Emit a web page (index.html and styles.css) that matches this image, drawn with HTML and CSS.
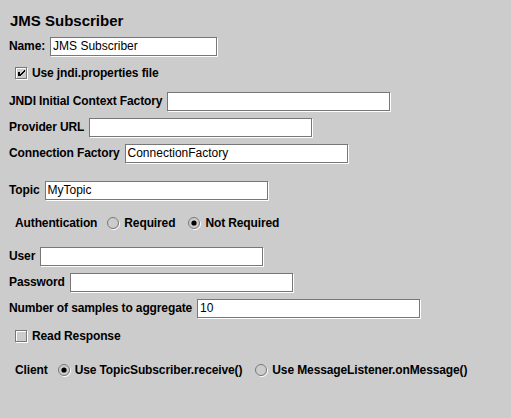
FILE: index.html
```html
<!DOCTYPE html>
<html>
<head>
<meta charset="utf-8">
<title>JMS Subscriber</title>
<link rel="stylesheet" href="styles.css">
</head>
<body>
<div class="panel">
  <div class="title">JMS Subscriber</div>

  <div class="row">
    <span class="label">Name:</span>
    <span class="field name-field">JMS Subscriber</span>
  </div>

  <div class="row sub mt1">
    <svg class="check" width="13" height="13" viewBox="0 0 13 13" shape-rendering="crispEdges">
      <rect x="1.5" y="1.5" width="11" height="11" fill="none" stroke="#fff"/>
      <rect x="0.5" y="0.5" width="11" height="11" fill="none" stroke="#777"/>
      <rect x="3" y="5" width="2" height="4" fill="#000"/>
      <rect x="5" y="7" width="1" height="2" fill="#000"/>
      <rect x="6" y="6" width="1" height="2" fill="#000"/>
      <rect x="7" y="5" width="1" height="2" fill="#000"/>
      <rect x="8" y="4" width="1" height="2" fill="#000"/>
      <rect x="9" y="3" width="1" height="2" fill="#000"/>
    </svg>
    <span class="label">Use jndi.properties file</span>
  </div>

  <div class="row mt2">
    <span class="label">JNDI Initial Context Factory</span>
    <span class="field"></span>
  </div>

  <div class="row">
    <span class="label">Provider URL</span>
    <span class="field"></span>
  </div>

  <div class="row">
    <span class="label">Connection Factory</span>
    <span class="field">ConnectionFactory</span>
  </div>

  <div class="row mt11">
    <span class="label">Topic</span>
    <span class="field">MyTopic</span>
  </div>

  <div class="row sub mt7">
    <span class="label group-label">Authentication</span>
    <span class="option">
      <svg class="radio" width="13" height="13" viewBox="0 0 13 13">
        <circle cx="7" cy="7" r="5.5" fill="none" stroke="#fff"/>
        <circle cx="6" cy="6" r="5.5" fill="#ccc" stroke="#777"/>
      </svg>
      <span class="label">Required</span>
    </span>
    <span class="option">
      <svg class="radio" width="13" height="13" viewBox="0 0 13 13">
        <circle cx="7" cy="7" r="5.5" fill="none" stroke="#fff"/>
        <circle cx="6" cy="6" r="5.5" fill="#ccc" stroke="#777"/>
        <circle cx="6" cy="6" r="2.6" fill="#000"/>
      </svg>
      <span class="label">Not Required</span>
    </span>
  </div>

  <div class="row mt7">
    <span class="label">User</span>
    <span class="field"></span>
  </div>

  <div class="row">
    <span class="label">Password</span>
    <span class="field"></span>
  </div>

  <div class="row">
    <span class="label">Number of samples to aggregate</span>
    <span class="field">10</span>
  </div>

  <div class="row sub mt2">
    <svg class="check" width="13" height="13" viewBox="0 0 13 13" shape-rendering="crispEdges">
      <rect x="1.5" y="1.5" width="11" height="11" fill="none" stroke="#fff"/>
      <rect x="0.5" y="0.5" width="11" height="11" fill="none" stroke="#777"/>
    </svg>
    <span class="label">Read Response</span>
  </div>

  <div class="row sub mt8">
    <span class="label group-label">Client</span>
    <span class="option">
      <svg class="radio" width="13" height="13" viewBox="0 0 13 13">
        <circle cx="7" cy="7" r="5.5" fill="none" stroke="#fff"/>
        <circle cx="6" cy="6" r="5.5" fill="#ccc" stroke="#777"/>
        <circle cx="6" cy="6" r="2.6" fill="#000"/>
      </svg>
      <span class="label">Use TopicSubscriber.receive()</span>
    </span>
    <span class="option">
      <svg class="radio" width="13" height="13" viewBox="0 0 13 13">
        <circle cx="7" cy="7" r="5.5" fill="none" stroke="#fff"/>
        <circle cx="6" cy="6" r="5.5" fill="#ccc" stroke="#777"/>
      </svg>
      <span class="label">Use MessageListener.onMessage()</span>
    </span>
  </div>
</div>
</body>
</html>
```

FILE: styles.css
```css
html, body {
  margin: 0;
  padding: 0;
  background: #cccccc;
}

body {
  width: 511px;
  height: 418px;
  overflow: hidden;
  font-family: "Liberation Sans", Arial, sans-serif;
  color: #000;
}

.panel {
  display: flex;
  flex-direction: column;
  padding: 7px 0 0 9px;
}

.title {
  height: 26px;
  display: flex;
  align-items: center;
  font-size: 15px;
  font-weight: bold;
  padding-left: 1px;
}

.row {
  height: 26px;
  display: flex;
  align-items: center;
  gap: 5px;
}

.row.sub {
  padding-left: 6px;
  gap: 4px;
}

.mt1 { margin-top: 1px; }
.mt2 { margin-top: 2px; }
.mt7 { margin-top: 7px; }
.mt8 { margin-top: 8px; }
.mt11 { margin-top: 11px; }

.label {
  font-size: 12px;
  font-weight: bold;
  letter-spacing: -0.12px;
  white-space: nowrap;
}

.group-label {
  margin-right: 6px;
}

.option {
  display: flex;
  align-items: center;
  gap: 4px;
  margin-right: 9px;
}

.check, .radio {
  display: block;
  flex: none;
}

.field {
  box-sizing: border-box;
  width: 223px;
  height: 19px;
  border: 1px solid #777;
  box-shadow: 1px 1px 0 #fff;
  background: #fff;
  font-size: 12px;
  line-height: 17px;
  padding-left: 2px;
  white-space: nowrap;
  overflow: hidden;
}

.name-field {
  width: 167px;
}
```
